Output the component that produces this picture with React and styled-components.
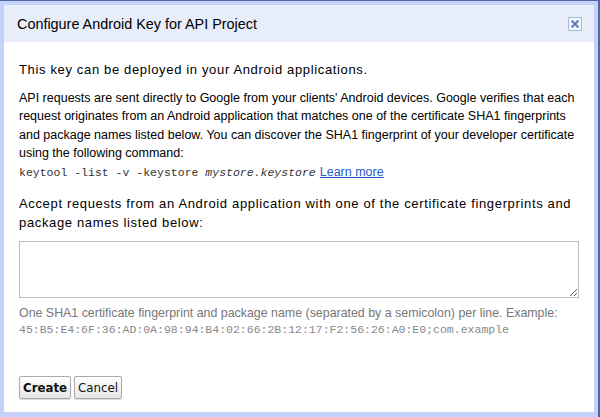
import React from "react"
import styled, {createGlobalStyle} from "styled-components"

const GlobalStyle = createGlobalStyle`
html, body {
    margin: 0;
    padding: 0;
    background: #fff;
}
`

const Frame = styled.div`
box-sizing: border-box;
width: 600px;
height: 417px;
background: #c3d1fb;
border-top: 1px solid #4d6aa6;
border-right: 2px solid #4d6aa6;
padding: 4px 4px 5px 4px;
`

const Dialog = styled.div`
display: flex;
flex-direction: column;
height: 100%;
background: #fff;
font-family: "Liberation Sans", Arial, sans-serif;
color: #000;
`

const Header = styled.div`
display: flex;
align-items: center;
justify-content: space-between;
height: 37px;
padding: 0 12px 0 13px;
background: #e8edfa;
`

const Title = styled.h1`
margin: 0;
font-size: 14.4px;
font-weight: normal;
`

const CloseButton = styled.button`
display: flex;
align-items: center;
justify-content: center;
box-sizing: border-box;
width: 14px;
height: 14px;
padding: 0;
margin-top: 1px;
border: 1px solid #a3b6de;
background: #f4f7fd;
cursor: pointer;
`

const Body = styled.div`
flex: 1;
display: flex;
flex-direction: column;
padding: 19px 15px 0 15px;
`

const Text = styled.p`
margin: 0 0 ${p => p.gap || 0}px 0;
font-size: ${p => p.spaced ? 13 : 12.5}px;
line-height: 18.5px;
letter-spacing: ${p => p.spaced ? "0.65px" : "0"};
white-space: nowrap;
`

const Code = styled.code`
font-family: "Liberation Mono", "Courier New", monospace;
font-size: 11.5px;
color: #333;
`

const Link = styled.a`
color: #1f5bc6;
text-decoration: underline;
margin-left: 4px;
`

const KeyArea = styled.textarea`
box-sizing: border-box;
display: block;
width: 560px;
height: 57px;
margin: 9px 0 7px 0;
border: 1px solid #bdbdbd;
resize: vertical;
font-family: "Liberation Mono", monospace;
`

const Hint = styled.div`
color: #777;
font-size: 12.4px;
line-height: 17px;
white-space: nowrap;
`

const HintCode = styled.div`
color: #888;
font-family: "Liberation Mono", "Courier New", monospace;
font-size: 11.5px;
line-height: 16px;
`

const Actions = styled.div`
display: flex;
gap: 3px;
margin-top: auto;
padding: 0 0 13px 0;
`

const Button = styled.button`
box-sizing: border-box;
height: 23px;
padding: 0 3px;
font-family: "DejaVu Sans", "Lucida Grande", sans-serif;
font-size: 11.8px;
font-weight: ${p => p.primary ? "bold" : "normal"};
color: #111;
border: 1px solid #aaa;
border-radius: 2px;
background: linear-gradient(#ffffff, #e6e6e6);
box-shadow: 0 1px 1px rgba(0,0,0,0.15);
`

function App(){
    return(
        <>
            <GlobalStyle />
            <Frame>
                <Dialog>
                    <Header>
                        <Title>Configure Android Key for API Project</Title>
                        <CloseButton aria-label="Close">
                            <svg width="10" height="10" viewBox="0 0 10 10">
                                <path d="M1.5 1.5 L8.5 8.5 M8.5 1.5 L1.5 8.5" stroke="#5c7dba" strokeWidth="2" />
                            </svg>
                        </CloseButton>
                    </Header>
                    <Body>
                        <Text spaced gap={9}>This key can be deployed in your Android applications.</Text>
                        <Text gap={13}>
                            API requests are sent directly to Google from your clients' Android devices. Google verifies that each<br/>
                            request originates from an Android application that matches one of the certificate SHA1 fingerprints<br/>
                            and package names listed below. You can discover the SHA1 fingerprint of your developer certificate<br/>
                            using the following command:<br/>
                            <Code>keytool -list -v -keystore <i>mystore.keystore</i></Code>
                            <Link href="#">Learn more</Link>
                        </Text>
                        <Text spaced>
                            Accept requests from an Android application with one of the certificate fingerprints and<br/>
                            package names listed below:
                        </Text>
                        <KeyArea />
                        <Hint>One SHA1 certificate fingerprint and package name (separated by a semicolon) per line. Example:</Hint>
                        <HintCode>45:B5:E4:6F:36:AD:0A:98:94:B4:02:66:2B:12:17:F2:56:26:A0:E0;com.example</HintCode>
                        <Actions>
                            <Button primary>Create</Button>
                            <Button>Cancel</Button>
                        </Actions>
                    </Body>
                </Dialog>
            </Frame>
        </>
    )
}

export default App
